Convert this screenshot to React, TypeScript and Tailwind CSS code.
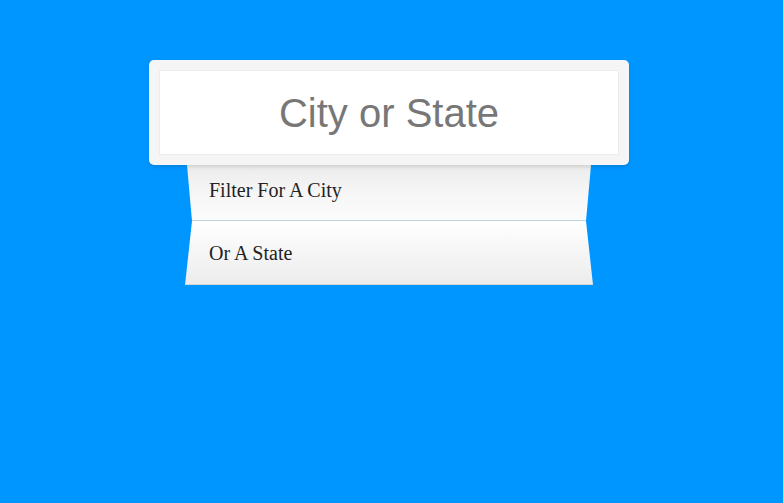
export default function App() {
  return (
    <div className="min-h-[503px] w-full bg-[#0096ff] pt-[60px] pl-[149px]">
      <div className="w-[480px]">
        <div className="relative z-10 rounded-[5px] bg-[#f5f5f5] p-[10px] shadow-[0_2px_4px_rgba(0,0,0,0.12)]">
          <div className="flex h-[85px] items-center justify-center border border-[#ececec] bg-white font-['Liberation_Sans',Arial,sans-serif] text-[40px] text-[#777]">
            City or State
          </div>
        </div>
        <div className="ml-[36px] flex w-[408px] flex-col">
          <div className="relative ml-[2px] h-[56px] w-[404px] [clip-path:polygon(0_0,404px_0,399px_56px,5px_56px)]">
            <div className="flex h-full items-center bg-gradient-to-b from-[#ececec] via-[#f6f6f6] to-[#fcfcfc] pb-[6px] pl-[22px] font-['Liberation_Serif','Times_New_Roman',serif] text-[20px] text-[#222]">
              Filter For A City
            </div>
            <div className="absolute bottom-0 left-0 h-px w-full bg-[#bcd3e0]" />
          </div>
          <div className="relative h-[64px] w-[408px] [clip-path:polygon(7px_0,401px_0,408px_64px,0_64px)]">
            <div className="flex h-full items-center bg-gradient-to-b from-white to-[#ececec] pl-[24px] pb-[1px] font-['Liberation_Serif','Times_New_Roman',serif] text-[20px] text-[#222]">
              Or A State
            </div>
            <div className="absolute bottom-0 left-0 h-px w-full bg-[#d6d6d6]" />
          </div>
        </div>
      </div>
    </div>
  );
}
